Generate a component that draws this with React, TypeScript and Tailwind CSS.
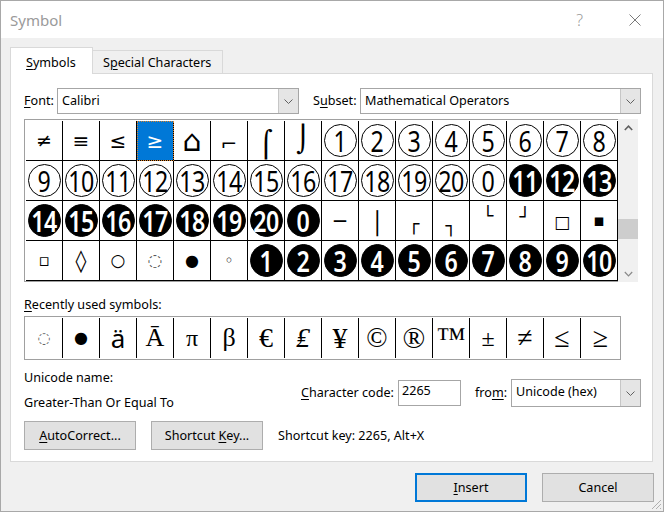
import clsx from "clsx";

type Cell = { t: string; k: "s" | "o" | "f"; c?: string; sel?: boolean };

const s = (t: string, c = "", sel = false): Cell => ({ t, k: "s", c, sel });
const o = (t: string): Cell => ({ t, k: "o" });
const f = (t: string): Cell => ({ t, k: "f" });

const rows: Cell[][] = [
  [
    s("≠", "text-[19px]"),
    s("≡", "text-[20px]"),
    s("≤", "text-[20px]"),
    s("≥", "text-[20px]", true),
    s("⌂", "text-[30px]"),
    s("⌐", "text-[20px] translate-y-[3px]"),
    s("⌠", "text-[26px] translate-y-[3px]"),
    s("⌡", "text-[26px] -translate-y-[2px]"),
    ...["1", "2", "3", "4", "5", "6", "7", "8"].map(o),
  ],
  [
    ...["9", "10", "11", "12", "13", "14", "15", "16", "17", "18", "19", "20", "0"].map(o),
    ...["11", "12", "13"].map(f),
  ],
  [
    ...["14", "15", "16", "17", "18", "19", "20", "0"].map(f),
    s("─", "text-[20px]"),
    s("│", "text-[22px] translate-y-[3px]"),
    s("┌", "text-[18px] translate-y-[3px]"),
    s("┐", "text-[18px] translate-y-[5px]"),
    s("└", "text-[18px] -translate-y-[5px]"),
    s("┘", "text-[18px] -translate-y-[4px]"),
    s("□", "text-[17px] translate-y-[2px]"),
    s("▪", "text-[17px]"),
  ],
  [
    s("▫", "text-[17px]"),
    s("◊", "text-[22px]"),
    s("○", "text-[17px]"),
    s("◌", "text-[17px] text-[#555]"),
    s("●", "text-[16px]"),
    s("◦", "text-[16px]"),
    ...["1", "2", "3", "4", "5", "6", "7", "8", "9", "10"].map(f),
  ],
];

const recent: { t: string; c: string }[] = [
  { t: "◌", c: "font-['DejaVu_Sans',sans-serif] text-[15px] text-[#666]" },
  { t: "●", c: "font-['DejaVu_Sans',sans-serif] text-[16px]" },
  { t: "ä", c: "font-['Noto_Sans',sans-serif] text-[26px]" },
  { t: "Ā", c: "text-[26px]" },
  { t: "π", c: "text-[24px]" },
  { t: "β", c: "text-[26px]" },
  { t: "€", c: "text-[28px]" },
  { t: "₤", c: "text-[28px] italic" },
  { t: "¥", c: "text-[30px]" },
  { t: "©", c: "text-[28px]" },
  { t: "®", c: "text-[30px]" },
  { t: "™", c: "text-[30px]" },
  { t: "±", c: "text-[24px]" },
  { t: "≠", c: "text-[28px]" },
  { t: "≤", c: "text-[28px]" },
  { t: "≥", c: "text-[28px]" },
];

function Chevron({ className = "" }: { className?: string }) {
  return (
    <svg width="9" height="5" viewBox="0 0 9 5" className={className}>
      <path d="M0.5 0.5 L4.5 4.5 L8.5 0.5" fill="none" stroke="#606060" strokeWidth="1" />
    </svg>
  );
}

function Combo({ value, w, h }: { value: string; w: string; h: string }) {
  return (
    <div className={clsx("flex border border-[#a6a6a6] bg-white", w, h)}>
      <span className="flex-1 pl-[4px] leading-[24px]">{value}</span>
      <span className="flex w-[20px] items-center justify-center border-l border-[#c6c6c6] bg-[#e5e5e5]">
        <Chevron />
      </span>
    </div>
  );
}

function GridCell({ cell }: { cell: Cell }) {
  if (cell.k === "s") {
    return (
      <div
        className={clsx(
          "flex h-[40px] w-[37px] items-center justify-center overflow-hidden border-r border-b border-black font-['DejaVu_Sans',sans-serif] leading-none",
          cell.sel && "bg-[#0078d7] text-white outline-1 outline-dotted outline-[#d9822b] -outline-offset-1"
        )}
      >
        <span className={clsx("inline-block", cell.c)}>{cell.t}</span>
      </div>
    );
  }
  const filled = cell.k === "f";
  return (
    <div className="flex h-[40px] w-[37px] items-center justify-center border-r border-b border-black">
      <span
        className={clsx(
          "flex h-[33px] w-[33px] shrink-0 items-center justify-center rounded-full border-[1.5px] border-black font-['Noto_Sans',sans-serif] text-[29px] leading-none",
          filled ? "bg-black font-semibold text-white" : "bg-white text-black"
        )}
      >
        <span className="inline-block scale-x-[0.8] tracking-[-0.5px]">{cell.t}</span>
      </span>
    </div>
  );
}

export default function App() {
  return (
    <div className="min-h-screen bg-white">
      <div className="relative flex h-[512px] w-[664px] flex-col border border-[#a8a8a8] bg-[#f0f0f0] font-['Noto_Sans',sans-serif] text-[12.6px] leading-[20px] text-black">
        {/* Title bar */}
        <div className="flex h-[37px] shrink-0 items-center bg-white pl-[9px]">
          <span className="text-[15px] text-[#9a9a9a]">Symbol</span>
          <span className="ml-auto text-[16px] font-light text-[#9a9a9a]">?</span>
          <svg width="12" height="12" viewBox="0 0 12 12" className="mr-[22px] ml-[46px]">
            <path d="M0.5 0.5 L11.5 11.5 M11.5 0.5 L0.5 11.5" stroke="#7a7a7a" strokeWidth="1" />
          </svg>
        </div>

        {/* Body */}
        <div className="flex flex-1 flex-col pt-[9px] pr-[10px] pl-[9px]">
          {/* Tabs */}
          <div className="relative z-10 -mb-px flex h-[27px] items-end">
            <div className="h-[27px] w-[83px] border-x border-t border-[#d9d9d9] bg-white pt-[5px] pl-[15px]">
              <span className="underline decoration-1 underline-offset-2">S</span>ymbols
            </div>
            <div className="h-[24px] w-[130px] border-t border-r border-b border-[#d9d9d9] bg-[#f0f0f0] pt-[2px] pl-[10px]">
              S<span className="underline decoration-1 underline-offset-2">p</span>ecial Characters
            </div>
          </div>

          {/* Panel */}
          <div className="flex h-[389px] flex-col border border-[#d9d9d9] bg-white pt-[14px] pr-[11px] pl-[13px]">
            {/* Font / Subset */}
            <div className="flex h-[26px] items-center">
              <span className="w-[33px]">
                <span className="underline decoration-1 underline-offset-2">F</span>ont:
              </span>
              <Combo value="Calibri" w="w-[242px]" h="h-[26px]" />
              <span className="ml-[14px] w-[47px]">
                S<span className="underline decoration-1 underline-offset-2">u</span>bset:
              </span>
              <Combo value="Mathematical Operators" w="w-[281px]" h="h-[26px]" />
            </div>

            {/* Character grid */}
            <div className="mt-[5px] flex">
              <div className="h-[163px] w-[594px] border-t border-b border-l border-[#a0a0a0] pt-px pl-px">
                {rows.map((r, i) => (
                  <div key={i} className="flex">
                    {r.map((c, j) => (
                      <GridCell key={j} cell={c} />
                    ))}
                  </div>
                ))}
              </div>
              <div className="flex h-[163px] w-[20px] flex-col bg-[#f0f0f0]">
                <div className="flex h-[17px] items-center justify-center">
                  <svg width="9" height="6" viewBox="0 0 9 6">
                    <path d="M0.8 5 L4.5 1.2 L8.2 5" fill="none" stroke="#606060" strokeWidth="1.6" />
                  </svg>
                </div>
                <div className="h-[83px]" />
                <div className="h-[20px] bg-[#cdcdcd]" />
                <div className="flex-1" />
                <div className="flex h-[17px] items-center justify-center">
                  <svg width="9" height="6" viewBox="0 0 9 6">
                    <path d="M0.8 1 L4.5 4.8 L8.2 1" fill="none" stroke="#8a8a8a" strokeWidth="1.2" />
                  </svg>
                </div>
              </div>
            </div>

            {/* Recently used */}
            <div className="mt-[13px]">
              <span className="underline decoration-1 underline-offset-2">R</span>ecently used symbols:
            </div>
            <div className="mt-px flex h-[44px] w-[597px] border border-[#a0a0a0] py-px pl-px font-['Liberation_Serif','DejaVu_Serif',serif]">
              {recent.map((r, i) => (
                <div
                  key={i}
                  className={clsx(
                    "flex items-center justify-center",
                    i < recent.length - 1 ? "w-[37px] border-r border-black" : "flex-1"
                  )}
                >
                  <span className={r.c}>{r.t}</span>
                </div>
              ))}
            </div>

            {/* Unicode name / character code */}
            <div className="mt-[8px] flex h-[45px]">
              <div className="flex flex-col gap-[5px]">
                <span>Unicode name:</span>
                <span>Greater-Than Or Equal To</span>
              </div>
              <div className="mt-[11px] ml-auto flex h-[28px] items-center">
                <span className="w-[97px]">
                  <span className="underline decoration-1 underline-offset-2">C</span>haracter code:
                </span>
                <div className="h-[26px] w-[63px] border border-[#a6a6a6] pl-[3px]">2265</div>
                <span className="ml-[14px] w-[36px]">
                  fro<span className="underline decoration-1 underline-offset-2">m</span>:
                </span>
                <Combo value="Unicode (hex)" w="w-[130px]" h="h-[28px]" />
              </div>
            </div>

            {/* Buttons row */}
            <div className="mt-[8px] flex items-center">
              <button className="h-[29px] w-[112px] border border-[#adadad] bg-[#e1e1e1]">
                <span className="underline decoration-1 underline-offset-2">A</span>utoCorrect...
              </button>
              <button className="ml-[15px] h-[29px] w-[112px] border border-[#adadad] bg-[#e1e1e1]">
                Shortcut <span className="underline decoration-1 underline-offset-2">K</span>ey...
              </button>
              <span className="ml-[15px]">Shortcut key: 2265, Alt+X</span>
            </div>
          </div>

          {/* Footer */}
          <div className="-mr-px mt-[11px] flex justify-end gap-[15px]">
            <button className="h-[29px] w-[112px] border-2 border-[#0078d7] bg-[#e1e1e1]">
              <span className="underline decoration-1 underline-offset-2">I</span>nsert
            </button>
            <button className="h-[29px] w-[112px] border border-[#adadad] bg-[#e1e1e1]">Cancel</button>
          </div>
        </div>

        {/* Resize grip */}
        <svg width="11" height="11" viewBox="0 0 11 11" className="absolute right-px bottom-px">
          <path d="M10 1 L1 10 M10 5 L5 10 M10 9 L9 10" stroke="#b0b0b0" strokeWidth="1" />
        </svg>
      </div>
    </div>
  );
}
